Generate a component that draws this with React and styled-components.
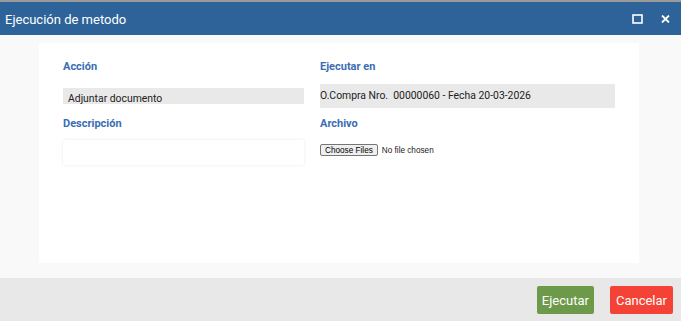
import React from 'react';
import styled, { createGlobalStyle } from 'styled-components';

const GlobalStyle = createGlobalStyle`
	html, body {
		margin: 0;
		padding: 0;
		height: 100%;
	}
	body {
		font-family: Roboto, 'Liberation Sans', Arial, sans-serif;
		background: #f9f9f9;
	}
	#root {
		height: 100%;
	}
`;

const Window = styled.div`
	height: 100%;
	display: flex;
	flex-direction: column;
	border-top: 2px solid #9a9a9a;
	box-sizing: border-box;
`;

const Header = styled.div`
	height: 33px;
	flex-shrink: 0;
	background: #2e6399;
	color: #fff;
	display: flex;
	align-items: center;
	padding: 0 11px 0 5px;
`;

const Title = styled.div`
	flex: 1;
	font-size: 13px;
	padding-top: 1px;
`;

const HeaderIcon = styled.svg`
	display: block;
	margin-left: ${props => props.gap || 0}px;
`;

const Body = styled.div`
	flex: 1;
	background: #f9f9f9;
	padding: 8px 42px 15px 39px;
	display: flex;
`;

const Panel = styled.div`
	flex: 1;
	background: #fff;
	padding: 17px 24px;
`;

const FormGrid = styled.div`
	display: grid;
	grid-template-columns: 241px 295px;
	grid-template-rows: 14px 25px 14px 25px;
	column-gap: 16px;
	row-gap: 9px;
`;

const Label = styled.div`
	font-size: 11px;
	line-height: 14px;
	font-weight: bold;
	color: #3b6db3;
`;

const ReadOnlyBox = styled.div`
	background: #e9e9e9;
	color: #222;
	font-size: 10.4px;
	overflow: hidden;
	white-space: pre;
	${props => props.compact ? `
		height: 16px;
		align-self: center;
		padding: 5px 5px 0;
		box-sizing: border-box;
		line-height: 12px;
	` : `
		height: 24px;
		align-self: end;
		line-height: 24px;
	`}
`;

const TextInput = styled.input`
	border: none;
	outline: none;
	background: #fff;
	box-shadow: 0 0 3px rgba(0, 0, 0, 0.09);
	height: 25px;
	margin: 0;
	padding: 0 5px;
	box-sizing: border-box;
	width: 100%;
`;

const FileInput = styled.input`
	font-family: 'Liberation Sans', Arial, sans-serif;
	font-size: 8.2px;
	margin: 4px 0 0;
	align-self: start;
	color: #222;

	&::file-selector-button {
		font: inherit;
		height: 12px;
		padding: 0 4px;
		margin-right: 4px;
		border: 1px solid #767676;
		border-radius: 2px;
		background: #efefef;
		color: #000;
	}
`;

const Footer = styled.div`
	height: 43px;
	flex-shrink: 0;
	background: #e8e8e8;
	display: flex;
	justify-content: flex-end;
	align-items: flex-start;
	gap: 16px;
	padding: 8px 8px 0 0;
	box-sizing: border-box;
`;

const Button = styled.button`
	height: 28px;
	border: none;
	border-radius: 2px;
	color: #fff;
	font-family: Roboto, 'Liberation Sans', Arial, sans-serif;
	font-size: 13px;
	padding: 0 ${props => props.danger ? 6 : 5}px;
	background: ${props => props.danger ? '#f44336' : '#6d9a4a'};
	cursor: pointer;
`;

export default function App() {
	return (
		<>
			<GlobalStyle />
			<Window>
				<Header>
					<Title>Ejecución de metodo</Title>
					<HeaderIcon width="11" height="10" viewBox="0 0 11 10">
						<rect x="1" y="1" width="9" height="8" fill="none" stroke="#fff" strokeWidth="1.6" />
					</HeaderIcon>
					<HeaderIcon width="9" height="8" viewBox="0 0 9 8" gap={18}>
						<path d="M1 0.5 L8 7.5 M8 0.5 L1 7.5" stroke="#fff" strokeWidth="1.8" />
					</HeaderIcon>
				</Header>
				<Body>
					<Panel>
						<FormGrid>
							<Label>Acción</Label>
							<Label>Ejecutar en</Label>
							<ReadOnlyBox compact>Adjuntar documento</ReadOnlyBox>
							<ReadOnlyBox>O.Compra Nro.  00000060 - Fecha 20-03-2026</ReadOnlyBox>
							<Label>Descripción</Label>
							<Label>Archivo</Label>
							<TextInput type="text" />
							<FileInput type="file" multiple />
						</FormGrid>
					</Panel>
				</Body>
				<Footer>
					<Button>Ejecutar</Button>
					<Button danger>Cancelar</Button>
				</Footer>
			</Window>
		</>
	);
}
